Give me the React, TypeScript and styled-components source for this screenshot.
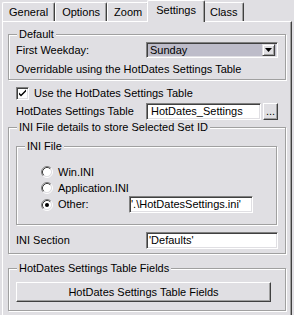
import React from 'react';
import styled, { createGlobalStyle } from 'styled-components';

const GlobalStyle = createGlobalStyle`
  html, body { margin: 0; padding: 0; background: #e0dfe3; }
  body {
    font-family: "Liberation Sans", Arial, sans-serif;
    font-size: 11px;
    color: #000;
  }
  * { box-sizing: border-box; }
`

const Frame = styled.div`
  width: 294px;
  height: 315px;
  overflow: hidden;
  background: #e0dfe3;
  display: flex;
  flex-direction: column;
`

const TabStrip = styled.div`
  display: flex;
  align-items: flex-end;
  height: 21px;
  padding-left: 2px;
  flex-shrink: 0;
`

const Tab = styled.div<{ $active?: boolean }>`
  position: relative;
  z-index: ${p => (p.$active ? 1 : 0)};
  display: flex;
  align-items: center;
  height: ${p => (p.$active ? '22px' : '19px')};
  margin: ${p => (p.$active ? '0 -2px -1px' : '0')};
  padding: ${p => (p.$active ? '0 8px 2px' : '0 6px')};
  background: #e0dfe3;
  border-top: 1px solid #fff;
  border-left: 1px solid #fff;
  border-right: 1px solid #404040;
  box-shadow: inset -1px 0 0 #a0a0a0;
  border-radius: 2px 2px 0 0;
  line-height: 13px;
  white-space: nowrap;
`

const Panel = styled.div`
  width: 290px;
  height: 296px;
  flex-shrink: 0;
  margin-left: 2px;
  border-top: 1px solid #fff;
  border-left: 1px solid #fff;
  border-right: 1px solid #404040;
  border-bottom: 1px solid #404040;
  box-shadow: inset -1px -1px 0 #a0a0a0;
  padding: 6px 4px 0 5px;
  display: flex;
  flex-direction: column;
`

const Group = styled.fieldset<{ $top?: number }>`
  margin: ${p => p.$top ?? 0}px 1px 0 0;
  padding: 0;
  min-width: 0;
  border: 1px solid #a0a0a0;
  box-shadow: inset 1px 1px 0 #fff, 1px 1px 0 #fff;
`

const Caption = styled.legend`
  margin-left: 8px;
  padding: 0 2px;
  line-height: 13px;
  background: #e0dfe3;
`

const GroupBody = styled.div<{ $pad: string }>`
  padding: ${p => p.$pad};
  display: flex;
  flex-direction: column;
`

const Row = styled.div<{ $top?: number; $h?: number; $side?: string }>`
  display: flex;
  align-items: center;
  justify-content: space-between;
  height: ${p => p.$h ?? 17}px;
  margin-top: ${p => p.$top ?? 0}px;
  padding: ${p => p.$side ?? '0'};
  line-height: 13px;
  white-space: nowrap;
`

const Note = styled.div<{ $top?: number }>`
  margin-top: ${p => p.$top ?? 0}px;
  line-height: 13px;
  white-space: nowrap;
`

const Field = styled.div<{ $w: number; $h?: number; $pad?: number }>`
  width: ${p => p.$w}px;
  height: ${p => p.$h ?? 17}px;
  flex-shrink: 0;
  background: #fff;
  border: 1px solid;
  border-color: #808080 #fff #fff #808080;
  box-shadow: inset 1px 1px 0 #404040, inset -1px -1px 0 #e0dfe3;
  padding-left: ${p => p.$pad ?? 3}px;
  display: flex;
  align-items: center;
  white-space: nowrap;
  overflow: hidden;
`

const Combo = styled(Field)`
  background: #bdbcc9;
  justify-content: space-between;
  padding-right: 2px;
`

const ComboArrow = styled.div`
  width: 13px;
  height: 12px;
  background: #e0dfe3;
  border: 1px solid;
  border-color: #e0dfe3 #404040 #404040 #e0dfe3;
  box-shadow: inset 1px 1px 0 #fff, inset -1px -1px 0 #a0a0a0;
  display: flex;
  align-items: center;
  justify-content: center;
`

const Pair = styled.div`
  display: flex;
  gap: 2px;
`

const Button = styled.button<{ $w: number; $h: number }>`
  width: ${p => p.$w}px;
  height: ${p => p.$h}px;
  padding: 0;
  font: inherit;
  color: #000;
  background: #e0dfe3;
  border: 1px solid;
  border-color: #fff #404040 #404040 #fff;
  box-shadow: inset -1px -1px 0 #a0a0a0;
  line-height: 13px;
`

const CheckRow = styled.div`
  display: flex;
  align-items: center;
  gap: 5px;
  height: 13px;
  margin-top: 7px;
  padding-left: 8px;
  line-height: 13px;
`

const CheckBox = styled.div`
  width: 13px;
  height: 13px;
  background: #fff;
  border: 1px solid;
  border-color: #808080 #fff #fff #808080;
  box-shadow: inset 1px 1px 0 #404040, inset -1px -1px 0 #e0dfe3;
  display: flex;
  align-items: center;
  justify-content: center;
`

const RadioList = styled.div`
  display: flex;
  flex-direction: column;
  padding-left: 24px;
`

const RadioRow = styled.div<{ $h?: number }>`
  display: flex;
  align-items: center;
  height: ${p => p.$h ?? 16}px;
  line-height: 13px;
  white-space: nowrap;
`

const RadioText = styled.span<{ $w?: number }>`
  margin-left: 5px;
  width: ${p => (p.$w ? `${p.$w}px` : 'auto')};
`

function Radio({ on }: { on?: boolean }) {
  return (
    <svg width="12" height="12" viewBox="0 0 12 12">
      <circle cx="6" cy="6" r="4.2" fill="#fff" />
      <path d="M2.11 9.89 A5.5 5.5 0 0 1 9.89 2.11" stroke="#808080" fill="none" />
      <path d="M9.89 2.11 A5.5 5.5 0 0 1 2.11 9.89" stroke="#fff" fill="none" />
      <path d="M2.82 9.18 A4.5 4.5 0 0 1 9.18 2.82" stroke="#404040" fill="none" />
      <path d="M9.18 2.82 A4.5 4.5 0 0 1 2.82 9.18" stroke="#e0dfe3" fill="none" />
      {on && <circle cx="6" cy="6" r="2" fill="#000" />}
    </svg>
  )
}

const tabs = ['General', 'Options', 'Zoom', 'Settings', 'Class']

export default function App() {
  return (
    <Frame>
      <GlobalStyle />
      <TabStrip>
        {tabs.map(t => (
          <Tab key={t} $active={t === 'Settings'}>{t}</Tab>
        ))}
      </TabStrip>
      <Panel>
        <Group>
          <Caption>Default</Caption>
          <GroupBody $pad="1px 7px 3px 7px">
            <Row $h={16}>
              <span>First Weekday:</span>
              <Combo $w={132} $h={16}>
                <span>Sunday</span>
                <ComboArrow>
                  <svg width="7" height="4" viewBox="0 0 7 4">
                    <path d="M0 0 H7 L3.5 4 Z" fill="#000" />
                  </svg>
                </ComboArrow>
              </Combo>
            </Row>
            <Note $top={5}>Overridable using the HotDates Settings Table</Note>
          </GroupBody>
        </Group>

        <CheckRow>
          <CheckBox>
            <svg width="9" height="9" viewBox="0 0 9 9">
              <path d="M1 3.5 L3 5.5 L8 0.5 L8 2.5 L3 7.5 L1 5.5 Z" fill="#000" />
            </svg>
          </CheckBox>
          <span>Use the HotDates Settings Table</span>
        </CheckRow>

        <Row $top={3} $side="0 9px 0 8px">
          <span>HotDates Settings Table</span>
          <Pair>
            <Field $w={115} $pad={4}>HotDates_Settings</Field>
            <Button $w={15} $h={17}>...</Button>
          </Pair>
        </Row>

        <Group $top={1}>
          <Caption>INI File details to store Selected Set ID</Caption>
          <GroupBody $pad="0 7px 4px 7px">
            <Group $top={6}>
              <Caption>INI File</Caption>
              <GroupBody $pad="11px 0 11px 0">
                <RadioList>
                  <RadioRow>
                    <Radio />
                    <RadioText>Win.INI</RadioText>
                  </RadioRow>
                  <RadioRow>
                    <Radio />
                    <RadioText>Application.INI</RadioText>
                  </RadioRow>
                  <RadioRow $h={17}>
                    <Radio on />
                    <RadioText $w={71}>Other:</RadioText>
                    <Field $w={124} $pad={1}>'.\HotDatesSettings.ini'</Field>
                  </RadioRow>
                </RadioList>
              </GroupBody>
            </Group>
            <Row $top={7}>
              <span>INI Section</span>
              <Field $w={132} $pad={2}>'Defaults'</Field>
            </Row>
          </GroupBody>
        </Group>

        <Group $top={8}>
          <Caption>HotDates Settings Table Fields</Caption>
          <GroupBody $pad="7px 7px 8px 7px">
            <Button $w={255} $h={20}>HotDates Settings Table Fields</Button>
          </GroupBody>
        </Group>
      </Panel>
    </Frame>
  )
}
